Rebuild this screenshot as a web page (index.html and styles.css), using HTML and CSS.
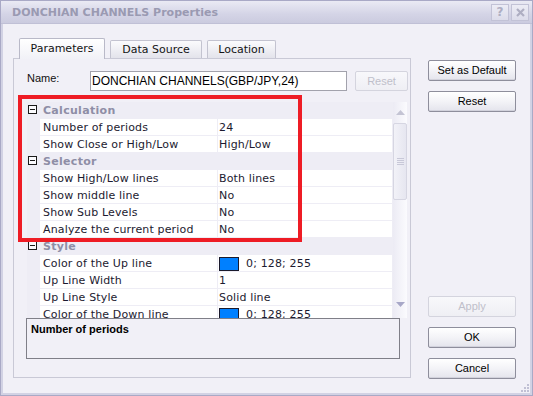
FILE: index.html
```html
<!DOCTYPE html>
<html>
<head>
<meta charset="utf-8">
<link rel="stylesheet" href="styles.css">
</head>
<body>
<div class="window">
  <div class="titlebar">
    <div class="title">DONCHIAN CHANNELS Properties</div>
    <div class="tbtn">?</div>
    <div class="tbtn tclose">
      <svg width="9" height="9" viewBox="0 0 9 9"><path d="M1 1 L8 8 M8 1 L1 8" stroke="#aeaec2" stroke-width="2.2"/></svg>
    </div>
  </div>
  <div class="main">
    <div class="left">
      <div class="tabs">
        <div class="tab sel t1">Parameters</div>
        <div class="tab t2">Data Source</div>
        <div class="tab t3">Location</div>
      </div>
      <div class="panel">
        <div class="namerow">
          <div class="nlabel">Name:</div>
          <div class="ninput">DONCHIAN CHANNELS(GBP/JPY,24)</div>
          <div class="btn small disabled">Reset</div>
        </div>
        <div class="grid">
          <div class="rows">
            <div class="cat"><div class="strip"><span class="minus"></span></div><div class="ctext">Calculation</div></div>
            <div class="row"><div class="strip"></div><div class="name">Number of periods</div><div class="value">24</div></div>
            <div class="row"><div class="strip"></div><div class="name">Show Close or High/Low</div><div class="value">High/Low</div></div>
            <div class="cat"><div class="strip"><span class="minus"></span></div><div class="ctext">Selector</div></div>
            <div class="row"><div class="strip"></div><div class="name">Show High/Low lines</div><div class="value">Both lines</div></div>
            <div class="row"><div class="strip"></div><div class="name">Show middle line</div><div class="value">No</div></div>
            <div class="row"><div class="strip"></div><div class="name">Show Sub Levels</div><div class="value">No</div></div>
            <div class="row"><div class="strip"></div><div class="name">Analyze the current period</div><div class="value">No</div></div>
            <div class="cat"><div class="strip"><span class="minus"></span></div><div class="ctext">Style</div></div>
            <div class="row"><div class="strip"></div><div class="name">Color of the Up line</div><div class="value"><span class="swatch"></span>0; 128; 255</div></div>
            <div class="row"><div class="strip"></div><div class="name">Up Line Width</div><div class="value">1</div></div>
            <div class="row"><div class="strip"></div><div class="name">Up Line Style</div><div class="value">Solid line</div></div>
            <div class="row"><div class="strip"></div><div class="name">Color of the Down line</div><div class="value"><span class="swatch"></span>0; 128; 255</div></div>
          </div>
          <div class="scrollbar">
            <div class="sbtn up"><svg width="9" height="5" viewBox="0 0 9 5"><path d="M0 5 L4.5 0 L9 5 Z" fill="#c4c4d4"/></svg></div>
            <div class="thumb"><span></span><span></span><span></span><span></span></div>
            <div class="track"></div>
            <div class="sbtn down"><svg width="9" height="5" viewBox="0 0 9 5"><path d="M0 0 L4.5 5 L9 0 Z" fill="#a8a8c8"/></svg></div>
          </div>
        </div>
        <div class="desc">Number of periods</div>
      </div>
    </div>
    <div class="right">
      <div class="btn">Set as Default</div>
      <div class="btn gap">Reset</div>
      <div class="btn disabled apply">Apply</div>
      <div class="btn gap">OK</div>
      <div class="btn gap">Cancel</div>
    </div>
  </div>
  <div class="highlight"></div>
  <svg class="grip" width="10" height="10" viewBox="0 0 10 10">
    <rect x="7" y="1" width="2" height="2" fill="#c0c0d4"/>
    <rect x="4" y="4" width="2" height="2" fill="#c0c0d4"/>
    <rect x="7" y="4" width="2" height="2" fill="#c0c0d4"/>
    <rect x="1" y="7" width="2" height="2" fill="#c0c0d4"/>
    <rect x="4" y="7" width="2" height="2" fill="#c0c0d4"/>
    <rect x="7" y="7" width="2" height="2" fill="#c0c0d4"/>
  </svg>
</div>
</body>
</html>
```
FILE: styles.css
```css
html, body {
  margin: 0;
  padding: 0;
  background: #f1f0f7;
}
.window {
  position: relative;
  width: 533px;
  height: 396px;
  box-sizing: border-box;
  border: 1px solid #a9a9c6;
  box-shadow: inset 0 0 0 2px #d2d2e4;
  background: #f1f0f7;
  display: flex;
  flex-direction: column;
  font-family: "DejaVu Sans", Verdana, sans-serif;
  font-size: 11px;
  color: #1c1a30;
}
.titlebar {
  height: 23px;
  flex: none;
  display: flex;
  align-items: center;
  padding: 0 3px 0 11px;
  background: linear-gradient(#eaeaf4, #d4d4e6 60%, #cbcbdf);
  border-bottom: 1px solid #c0c0d6;
  box-sizing: border-box;
}
.title {
  flex: 1;
  font-weight: bold;
  font-size: 11px;
  color: #9a9ab2;
  padding-top: 1px;
}
.tbtn {
  width: 18px;
  height: 17px;
  box-sizing: border-box;
  border: 1px solid #c2c2d6;
  background: linear-gradient(#ececf5, #dcdcea);
  color: #aeaec2;
  font-weight: bold;
  font-size: 12px;
  display: flex;
  align-items: center;
  justify-content: center;
  margin-left: 2px;
}
.main {
  flex: 1;
  display: flex;
  padding: 0 16px 0 12px;
}
.left {
  width: 398px;
  padding-top: 14px;
}
.tabs {
  height: 20px;
  display: flex;
  align-items: flex-end;
  position: relative;
  z-index: 1;
}
.tab {
  height: 18px;
  box-sizing: border-box;
  border: 1px solid #c3c3d0;
  border-bottom: none;
  border-radius: 2px 2px 0 0;
  background: linear-gradient(#fbfbfd, #e3e3eb);
  display: flex;
  align-items: center;
  justify-content: center;
  color: #141414;
  margin-left: 5px;
}
.tab.sel {
  height: 21px;
  margin-bottom: -1px;
  background: linear-gradient(#ffffff, #f1f1f7);
  border-color: #b9b9c8;
  padding-bottom: 1px;
}
.t1 { width: 86px; margin-left: 6px; }
.t2 { width: 92px; }
.t3 { width: 69px; }
.panel {
  height: 320px;
  box-sizing: border-box;
  border: 1px solid #c9c9d6;
  padding: 12px 2px 0 13px;
}
.namerow {
  display: flex;
  height: 20px;
  align-items: center;
}
.nlabel {
  width: 63px;
  font-family: "Liberation Sans", Arial, sans-serif;
  font-size: 11px;
  color: #111;
  align-self: flex-start;
  padding-top: 1px;
}
.ninput {
  width: 257px;
  height: 20px;
  box-sizing: border-box;
  border: 1px solid #a2a2ac;
  background: #fff;
  font-family: "Liberation Sans", Arial, sans-serif;
  font-size: 12px;
  color: #000;
  padding-left: 1px;
  line-height: 18px;
}
.btn {
  height: 21px;
  box-sizing: border-box;
  border: 1px solid #8e8e9c;
  border-radius: 2px;
  background: linear-gradient(#ffffff, #f3f3f7 50%, #e4e4ec);
  box-shadow: inset 0 -1px 0 #d2d2dc;
  display: flex;
  align-items: center;
  justify-content: center;
  font-family: "Liberation Sans", Arial, sans-serif;
  font-size: 11px;
  color: #000;
  padding-bottom: 1px;
}
.btn.small {
  width: 53px;
  height: 20px;
  margin-left: 8px;
}
.btn.disabled {
  border-color: #d4d4de;
  color: #bfbfca;
  background: linear-gradient(#f8f8fb, #efeff4);
  box-shadow: none;
}
.grid {
  margin-top: 11px;
  width: 380px;
  height: 216px;
  display: flex;
  background: #eeedf5;
  overflow: hidden;
}
.rows {
  width: 366px;
  overflow: hidden;
}
.row, .cat {
  display: flex;
  height: 17px;
  box-sizing: border-box;
  padding-bottom: 1px;
  line-height: 18px;
  letter-spacing: 0.15px;
  white-space: nowrap;
}
.strip {
  width: 13px;
  flex: none;
  position: relative;
}
.name {
  width: 174px;
  flex: none;
  background: #fff;
  padding-left: 3px;
  margin-right: 1px;
  overflow: hidden;
}
.value {
  flex: 1;
  background: #fff;
  padding-left: 1px;
  margin-right: 1px;
  display: flex;
  align-items: flex-start;
  overflow: hidden;
}
.swatch {
  width: 20px;
  height: 14px;
  box-sizing: border-box;
  border: 1px solid #1a1a2c;
  background: #0080ff;
  margin: 2px 7px 0 0;
  flex: none;
}
.cat .ctext {
  padding-left: 3px;
  font-weight: bold;
  color: #8e8ea6;
  letter-spacing: 0.3px;
}
.minus {
  position: absolute;
  left: 1px;
  top: 3px;
  width: 9px;
  height: 9px;
  box-sizing: border-box;
  border: 1px solid #1a1a1a;
  background: #fafafd;
}
.minus::after {
  content: "";
  position: absolute;
  left: 1px;
  top: 3px;
  width: 5px;
  height: 1px;
  background: #1a1a1a;
}
.scrollbar {
  width: 14px;
  display: flex;
  flex-direction: column;
  background: linear-gradient(to right, #ecebf4, #fbfbfe);
}
.sbtn {
  height: 21px;
  flex: none;
  display: flex;
  justify-content: center;
  align-items: center;
}
.sbtn.down {
  height: 24px;
  align-items: flex-start;
  padding-top: 8px;
  box-sizing: border-box;
}
.thumb {
  height: 77px;
  box-sizing: border-box;
  border: 1px solid #d6d6e2;
  border-radius: 2px;
  background: linear-gradient(to right, #f2f2f8, #e6e6f0);
  display: flex;
  flex-direction: column;
  align-items: center;
  justify-content: center;
  gap: 1px;
}
.thumb span {
  width: 7px;
  height: 1px;
  background: #c8c8d8;
}
.track { flex: 1; }
.desc {
  margin-left: -1px;
  width: 374px;
  height: 41px;
  box-sizing: border-box;
  border: 1px solid #7f7f88;
  font-family: "Liberation Sans", Arial, sans-serif;
  font-weight: bold;
  font-size: 11px;
  color: #000;
  padding: 4px 0 0 4px;
}
.right {
  width: 88px;
  margin-left: 17px;
  padding-top: 36px;
  display: flex;
  flex-direction: column;
}
.gap { margin-top: 10px; }
.apply { margin-top: 184px; }
.highlight {
  position: absolute;
  left: 17px;
  top: 94px;
  width: 284px;
  height: 147px;
  box-sizing: border-box;
  border: 4px solid #ee1c25;
}
.grip {
  position: absolute;
  right: 2px;
  bottom: 2px;
}
```
